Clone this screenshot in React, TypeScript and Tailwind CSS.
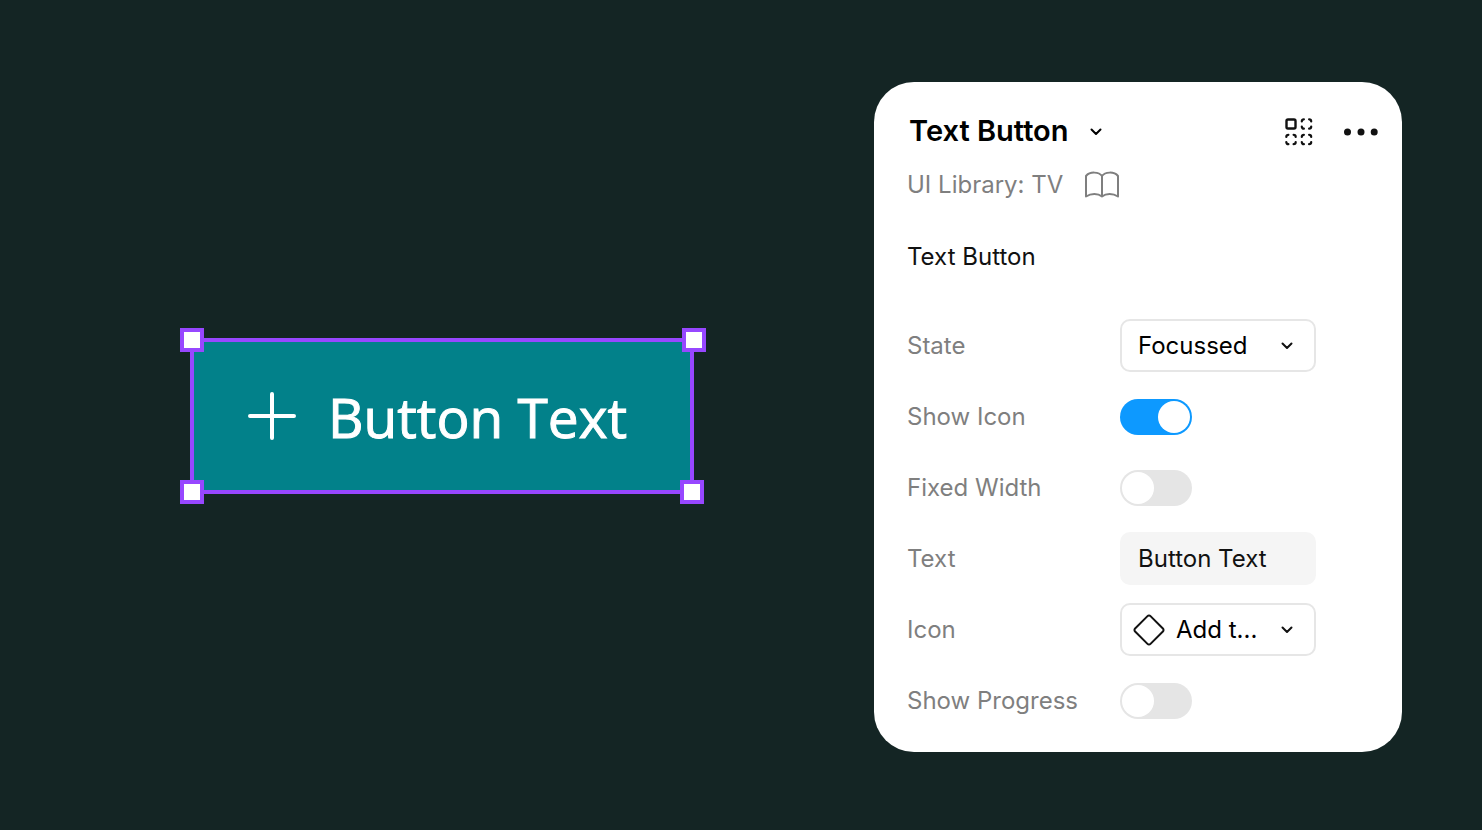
import { useState } from "react";

const toggleClass =
  "relative h-9 w-[72px] shrink-0 cursor-pointer appearance-none rounded-full bg-[#e5e5e5] before:absolute before:top-0.5 before:left-0.5 before:size-8 before:rounded-full before:bg-white before:content-[''] checked:bg-[#0d99ff] checked:before:left-[38px]";

function Chevron() {
  return (
    <svg width="12" height="8" viewBox="0 0 12 8" fill="none" stroke="currentColor" strokeWidth="2" strokeLinecap="round" strokeLinejoin="round" aria-hidden="true">
      <path d="M1.5 1.5 6 6l4.5-4.5" />
    </svg>
  );
}

function VariantsIcon() {
  return (
    <svg width="28" height="28" viewBox="0 0 28 28" fill="none" stroke="currentColor" strokeWidth="2.2" strokeLinecap="round" aria-hidden="true">
      <rect x="1.5" y="1.5" width="9" height="9" rx="1.5" strokeWidth="2.4" />
      {["translate(15.5 0)", "translate(0 15.5)", "translate(15.5 15.5)"].map((t) => (
        <path
          key={t}
          transform={t}
          d="M1.3 3.4Q1.3 1.3 3.4 1.3M8.6 1.3Q10.7 1.3 10.7 3.4M10.7 8.6Q10.7 10.7 8.6 10.7M3.4 10.7Q1.3 10.7 1.3 8.6"
        />
      ))}
    </svg>
  );
}

function MoreIcon() {
  return (
    <svg width="36" height="8" viewBox="0 0 36 8" fill="currentColor" aria-hidden="true">
      <circle cx="4.5" cy="4" r="3.5" />
      <circle cx="18" cy="4" r="3.5" />
      <circle cx="31.2" cy="4" r="3.5" />
    </svg>
  );
}

function BookIcon() {
  return (
    <svg width="36" height="28" viewBox="0 0 36 28" fill="none" stroke="currentColor" strokeWidth="2" strokeLinecap="round" strokeLinejoin="round" aria-hidden="true">
      <path d="M18 5C15 .8 6 .2 2 5V25.500c5-3.200 12-3.200 16 0 4-3.200 11-3.200 16 0V5C30 .2 21 .8 18 5V25.500" />
    </svg>
  );
}

function DiamondIcon() {
  return (
    <svg className="shrink-0" width="32" height="32" viewBox="0 0 32 32" fill="none" stroke="currentColor" strokeWidth="2" strokeLinejoin="round" aria-hidden="true">
      <path d="M14.500 2.100a2.100 2.100 0 0 1 3 0l12.400 12.400a2.100 2.100 0 0 1 0 3L17.500 29.900a2.100 2.100 0 0 1-3 0L2.100 17.500a2.100 2.100 0 0 1 0-3z" />
    </svg>
  );
}

function Toggle({ id, initial = false }: { id: string; initial?: boolean }) {
  const [on, setOn] = useState(initial);
  return <input id={id} type="checkbox" role="switch" checked={on} onChange={(e) => setOn(e.target.checked)} className={toggleClass} />;
}

function Row({ id, label, children }: { id: string; label: string; children: React.ReactNode }) {
  return (
    <div className="flex h-[53px] items-center">
      <label htmlFor={id} className="w-[213px] shrink-0 text-[#7f7f7f]">
        {label}
      </label>
      {children}
    </div>
  );
}

function SelectBox({ id, options, icon }: { id: string; options: string[]; icon?: React.ReactNode }) {
  return (
    <div className="relative flex h-full w-[196px] items-center">
      {icon && <span className="pointer-events-none absolute left-[13px]">{icon}</span>}
      <select
        id={id}
        className={
          "h-full w-full appearance-none rounded-[10px] border-2 border-[#e6e6e6] bg-white pr-11 text-black " +
          (icon ? "pl-[54px]" : "pl-4")
        }
      >
        {options.map((o) => (
          <option key={o}>{o}</option>
        ))}
      </select>
      <span className="pointer-events-none absolute right-[23px]">
        <Chevron />
      </span>
    </div>
  );
}

const handleClass = "absolute size-6 border-4 border-[#9747ff] bg-white";

export default function App() {
  const [text, setText] = useState("Button Text");
  return (
    <main className="flex min-h-screen flex-wrap items-center justify-between gap-10 bg-[#142524] pt-1 pr-20 pl-[190px] font-['Inter',sans-serif]">
      <section className="pb-0.5">
        <div className="relative border-4 border-[#9747ff]">
          <button type="button" className="flex h-[148px] min-w-[496px] items-center gap-8 bg-[#02818a] px-[54px] text-white">
            <svg width="48" height="48" viewBox="0 0 48 48" stroke="currentColor" strokeWidth="4" strokeLinecap="round" aria-hidden="true">
              <path d="M24 2v44M2 24h44" />
            </svg>
            <span className="font-['Open_Sans',sans-serif] text-[55px] leading-none whitespace-nowrap [-webkit-text-stroke:1px_white] [stroke-linejoin:round]">
              Button Text
            </span>
          </button>
          <span className={handleClass + " -top-3.5 -left-3.5"} />
          <span className={handleClass + " -top-3.5 -right-4"} />
          <span className={handleClass + " -bottom-3.5 -left-3.5"} />
          <span className={handleClass + " -right-3.5 -bottom-3.5"} />
        </div>
      </section>

      <aside className="w-[528px] rounded-[40px] bg-white px-[33px] pt-7 pb-[25px] text-2xl text-[#111]">
        <header className="-mr-2.5 flex h-[43px] items-center justify-between">
          <button type="button" className="flex items-center gap-[21px] pl-0.5 text-[29px] font-semibold text-black">
            Text Button
            <Chevron />
          </button>
          <div className="flex items-center gap-[30px]">
            <button type="button" aria-label="Variants">
              <VariantsIcon />
            </button>
            <button type="button" aria-label="More options">
              <MoreIcon />
            </button>
          </div>
        </header>
        <a href="#library" className="mt-4 flex w-fit items-center gap-[21px] text-[#7f7f7f]">
          UI Library: TV
          <BookIcon />
        </a>
        <h2 className="mt-10">Text Button</h2>
        <form className="mt-[46px] flex flex-col gap-[18px]">
          <Row id="state" label="State">
            <SelectBox id="state" options={["Focussed", "Default"]} />
          </Row>
          <Row id="show-icon" label="Show Icon">
            <Toggle id="show-icon" initial />
          </Row>
          <Row id="fixed-width" label="Fixed Width">
            <Toggle id="fixed-width" />
          </Row>
          <Row id="text" label="Text">
            <input
              id="text"
              type="text"
              value={text}
              onChange={(e) => setText(e.target.value)}
              className="h-full w-[196px] rounded-[10px] bg-[#f5f5f5] px-[18px]"
            />
          </Row>
          <Row id="icon" label="Icon">
            <SelectBox id="icon" options={["Add t..."]} icon={<DiamondIcon />} />
          </Row>
          <Row id="show-progress" label="Show Progress">
            <Toggle id="show-progress" />
          </Row>
        </form>
      </aside>
    </main>
  );
}
